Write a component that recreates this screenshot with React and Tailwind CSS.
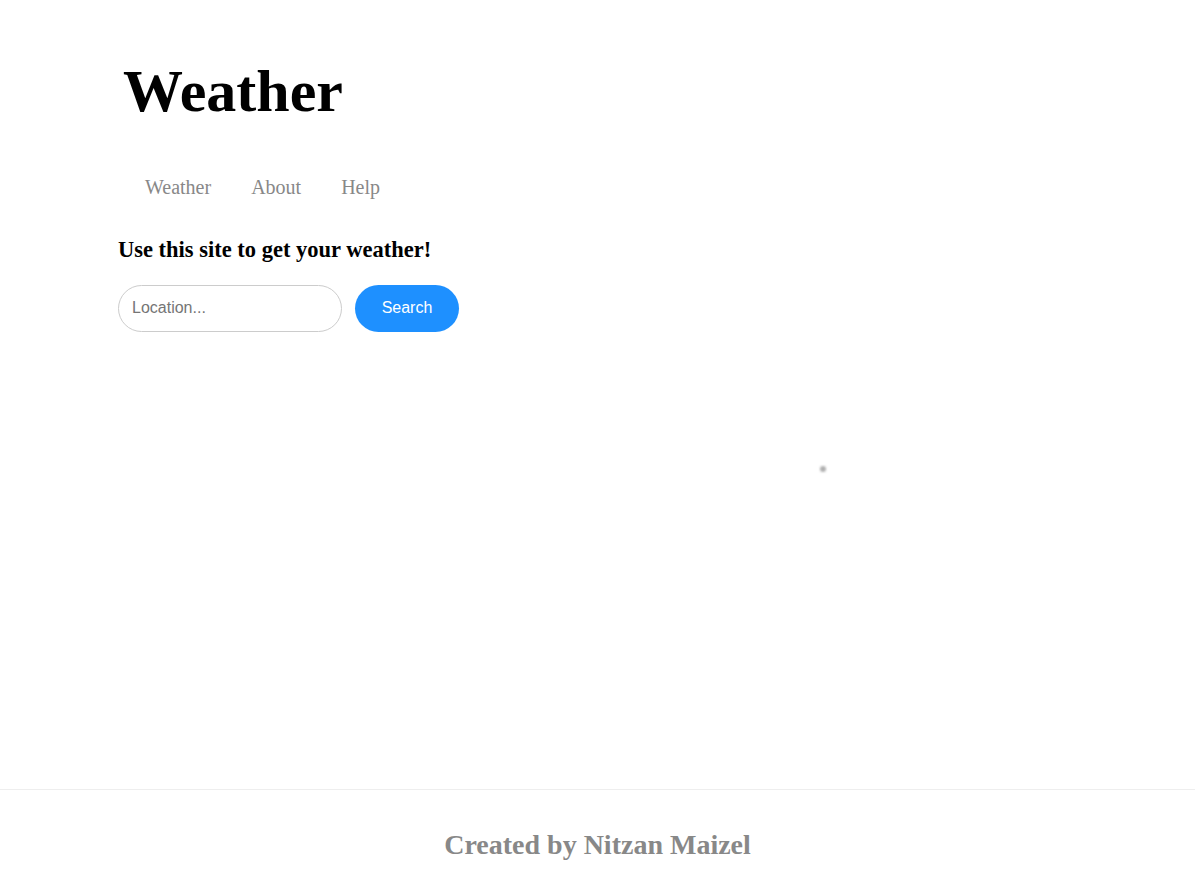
import React, { useState } from "react";

export default function App() {
  const [location, setLocation] = useState("");

  return (
    <div className="min-h-screen flex flex-col bg-white" style={{ fontFamily: '"Liberation Serif", "Times New Roman", serif' }}>
      <div className="flex-1 pl-[118px] relative">
        <h1 className="text-[60px] font-bold leading-[1.15] pt-[57px] pl-[5px] text-black">Weather</h1>

        <nav className="flex gap-[40px] pl-[27px] mt-[46px] text-[20px] text-[#888888]">
          <a href="#">Weather</a>
          <a href="#">About</a>
          <a href="#">Help</a>
        </nav>

        <h2 className="text-[22.5px] font-bold mt-[31px] text-black">Use this site to get your weather!</h2>

        <form className="flex gap-[13px] mt-[18px]" onSubmit={e => e.preventDefault()}>
          <input
            value={location}
            onChange={e => setLocation(e.target.value)}
            placeholder="Location..."
            className="w-[224px] h-[47px] rounded-full border border-[#cccccc] px-[13px] text-[16px] placeholder:text-[#757575] outline-none"
            style={{ fontFamily: '"Liberation Sans", Arial, sans-serif' }}
          />
          <button
            className="w-[104px] h-[47px] rounded-full bg-[#1e90ff] text-white text-[16px]"
            style={{ fontFamily: '"Liberation Sans", Arial, sans-serif' }}
          >
            Search
          </button>
        </form>

        <div className="absolute left-[820px] top-[466px] w-[6px] h-[6px] rounded-full bg-[#9a9a9a] blur-[1px] opacity-80"></div>
      </div>

      <footer className="border-t border-[#eeeeee] h-[107px] flex items-center justify-center">
        <p className="text-[28px] font-bold text-[#888888] mt-[4px]">Created by Nitzan Maizel</p>
      </footer>
    </div>
  );
}
